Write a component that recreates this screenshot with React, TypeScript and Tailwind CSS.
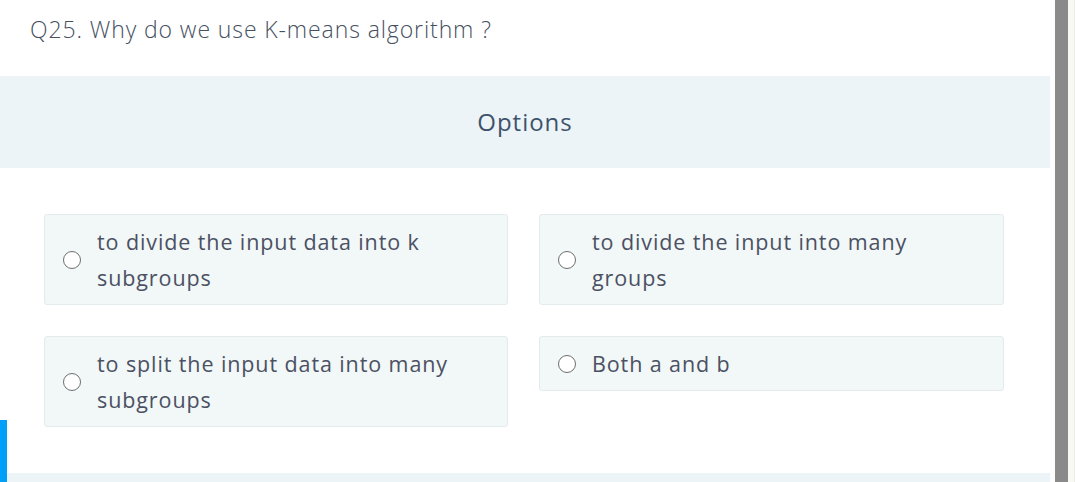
const options = [
  { id: "a", text: "to divide the input data into k subgroups" },
  { id: "b", text: "to divide the input into many groups" },
  { id: "c", text: "to split the input data into many subgroups" },
  { id: "d", text: "Both a and b" },
];

const font = { fontFamily: '"Open Sans", "Liberation Sans", sans-serif' };

const App = () => {
  return (
    <div className="flex h-[482px] w-[1075px] overflow-hidden bg-white" style={font}>
      <main className="relative w-[1050px] shrink-0">
        <h1 className="h-[76px] pl-[30px] pt-[11px] text-[23px] font-light leading-[36px] tracking-[0.9px] text-[#45505f]">
          Q25. Why do we use K-means algorithm ?
        </h1>
        <div className="flex h-[92px] items-center justify-center bg-[#edf4f8]">
          <h2 className="text-[24px] tracking-[1px] text-[#3e536b]">Options</h2>
        </div>
        <div className="grid grid-cols-[464px_465px] items-start gap-x-[31px] gap-y-[31px] px-[44px] pt-[46px]">
          {options.map((option) => (
            <label
              key={option.id}
              className="flex items-center rounded-[3px] border border-[#e4ebec] bg-[#f2f7f7] py-[8.5px] pr-[30px]"
            >
              <span className="ml-[18px] mr-[16px] h-[18px] w-[18px] shrink-0 rounded-full border-[1.5px] border-[#6e6e6e] bg-white" />
              <span className="text-[21.5px] leading-[36px] tracking-[0.9px] text-[#4b5163]">{option.text}</span>
            </label>
          ))}
        </div>
        <div className="mt-[46px] h-[20px] bg-[#edf4f8]" />
        <div className="absolute left-0 top-[420px] h-[62px] w-[7px] bg-[#00a0f8]" />
      </main>
      <div className="w-[5px] bg-[#fdfdfd]" />
      <div className="w-[13px] bg-[#8a8a8a]" />
      <div className="flex-1 border-r border-[#ecece6] bg-[#f8f8f5]" />
    </div>
  );
};

export default App;
